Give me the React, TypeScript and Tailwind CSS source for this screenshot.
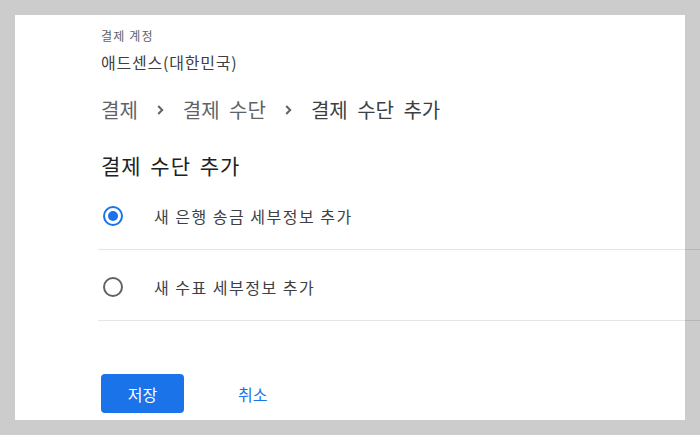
import React, { useState } from 'react';

const Chevron: React.FC = () => (
  <svg className="mx-[19px] h-[10px] w-[7px] shrink-0" viewBox="0 0 7 10" fill="none">
    <path d="M1.2 1 L5.2 5 L1.2 9" stroke="#5f6368" strokeWidth={2} />
  </svg>
);

const Radio: React.FC<{ checked: boolean }> = ({ checked }) => (
  <span
    className={`flex h-[20px] w-[20px] shrink-0 items-center justify-center rounded-full border-2 ${
      checked ? 'border-[#1a73e8]' : 'border-[#5f6368]'
    }`}
  >
    {checked && <span className="h-[10px] w-[10px] rounded-full bg-[#1a73e8]" />}
  </span>
);

const options = ['새 은행 송금 세부정보 추가', '새 수표 세부정보 추가'];

const App: React.FC = () => {
  const [selected, setSelected] = useState(0);

  return (
    <div
      className="min-h-[435px] bg-[#cccccc] p-[15px]"
      style={{ fontFamily: '"Noto Sans CJK KR", "Noto Sans", sans-serif' }}
    >
      <div className="h-[405px] bg-white pl-[86px] pt-[13px]">
        <div className="text-[12px] leading-[16px] tracking-[1.2px] text-[#5f6368]">결제 계정</div>
        <div className="mt-2 text-[16px] leading-[20px] tracking-[0.8px] text-[#3c4043]">애드센스(대한민국)</div>

        <nav className="mt-6 flex items-center text-[20px] leading-[28px] text-[#5f6368] [word-spacing:5px]">
          <span>결제</span>
          <Chevron />
          <span>결제 수단</span>
          <Chevron />
          <span className="text-[#3c4043]">결제 수단 추가</span>
        </nav>

        <h1 className="mt-[27px] text-[21px] font-normal leading-[28px] tracking-[1px] text-[#202124] [word-spacing:3px]">
          결제 수단 추가
        </h1>

        <div className="-mr-[15px] ml-[-3px]">
          {options.map((label, i) => (
            <label
              key={label}
              onClick={() => setSelected(i)}
              className="flex h-[71px] cursor-pointer items-center border-b border-[rgba(0,0,0,0.1)] pl-[5px] pt-[4px]"
            >
              <Radio checked={selected === i} />
              <span className="ml-[31px] text-[16px] tracking-[1.5px] text-[#3c4043]">{label}</span>
            </label>
          ))}
        </div>

        <div className="mt-[53px] flex items-center">
          <button className="h-[39px] w-[83px] rounded-[4px] bg-[#1a73e8] text-[16px] text-white">저장</button>
          <button className="ml-[54px] text-[16px] text-[#1a73e8]">취소</button>
        </div>
      </div>
    </div>
  );
};

export default App;
